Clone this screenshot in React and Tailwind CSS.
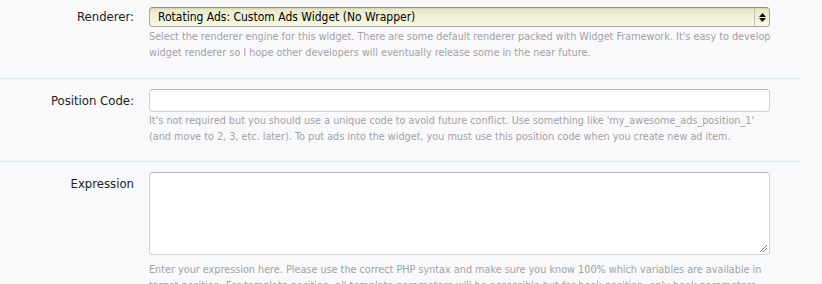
const FONT = "font-['DejaVu_Sans_Condensed','DejaVu_Sans',sans-serif]";

function Row({ label, children, help, pt, helpMt, pb }) {
  return (
    <div className={`flex border-b border-[#d6ecee] ${pt} ${pb}`}>
      <div className="w-[136px] shrink-0 text-right pr-[2px]">
        {label}
      </div>
      <div className="ml-[13px] w-[621px]">
        {children}
        <div className={`text-[10.75px] leading-[15.5px] text-[#a2a2a6] whitespace-nowrap ${helpMt}`}>
          {help}
        </div>
      </div>
    </div>
  );
}

export default function App() {
  return (
    <div className={`w-[822px] h-[284px] overflow-hidden bg-[#f9f9fc] ${FONT}`}>
      <div className="w-[801px]">
        <Row
          pt="pt-[7px]"
          pb="pb-[18px]"
          helpMt="mt-[2px]"
          label={<div className="text-[13px] text-[#222] leading-[20px]">Renderer:</div>}
          help={
            <>
              Select the renderer engine for this widget. There are some default renderer packed with Widget Framework. It's easy to develop
              <br />
              widget renderer so I hope other developers will eventually release some in the near future.
            </>
          }
        >
          <div className="h-[20px] w-[621px] flex items-stretch rounded-[4px] border border-[#a9a99a] border-t-[#8f8f84] bg-gradient-to-b from-[#e6e6c6] via-[#f1f1d8] to-[#f9f9e4] shadow-[inset_0_1px_1px_rgba(0,0,0,0.08)]">
            <div className="flex-1 pl-[8px] text-[12px] leading-[18px] text-black">
              Rotating Ads: Custom Ads Widget (No Wrapper)
            </div>
            <div className="w-[15px] border-l border-[#c4c4b0] flex flex-col items-center justify-center gap-[1px]">
              <svg width="7" height="4" viewBox="0 0 7 4"><path d="M3.5 0 L7 4 L0 4 Z" fill="#111" /></svg>
              <svg width="7" height="4" viewBox="0 0 7 4"><path d="M0 0 L7 0 L3.5 4 Z" fill="#111" /></svg>
            </div>
          </div>
        </Row>
        <Row
          pt="pt-[10px]"
          pb="pb-[17px]"
          helpMt="mt-[1px]"
          label={<div className="text-[13px] text-[#222] leading-[23px]">Position Code:</div>}
          help={
            <>
              It's not required but you should use a unique code to avoid future conflict. Use something like 'my_awesome_ads_position_1'
              <br />
              (and move to 2, 3, etc. later). To put ads into the widget, you must use this position code when you create new ad item.
            </>
          }
        >
          <div className="h-[23px] w-[621px] rounded-[4px] border border-[#cfcfd2] border-t-[#b8b8bb] bg-white"></div>
        </Row>
        <Row
          pt="pt-[10px]"
          pb="pb-[10px]"
          helpMt="mt-[7px]"
          label={<div className="text-[13px] text-[#222] leading-[23px]">Expression</div>}
          help={
            <>
              Enter your expression here. Please use the correct PHP syntax and make sure you know 100% which variables are available in
              <br />
              target position. For template position, all template parameters will be accessible but for hook position, only hook parameters
            </>
          }
        >
          <div className="relative h-[83px] w-[621px] rounded-[4px] border border-[#cfcfd2] border-t-[#b8b8bb] bg-white">
            <svg className="absolute right-[1px] bottom-[1px]" width="10" height="10" viewBox="0 0 10 10">
              <path d="M9 2 L2 9 M9 5 L5 9" stroke="#7a7a7a" strokeWidth="1" />
            </svg>
          </div>
        </Row>
      </div>
    </div>
  );
}
